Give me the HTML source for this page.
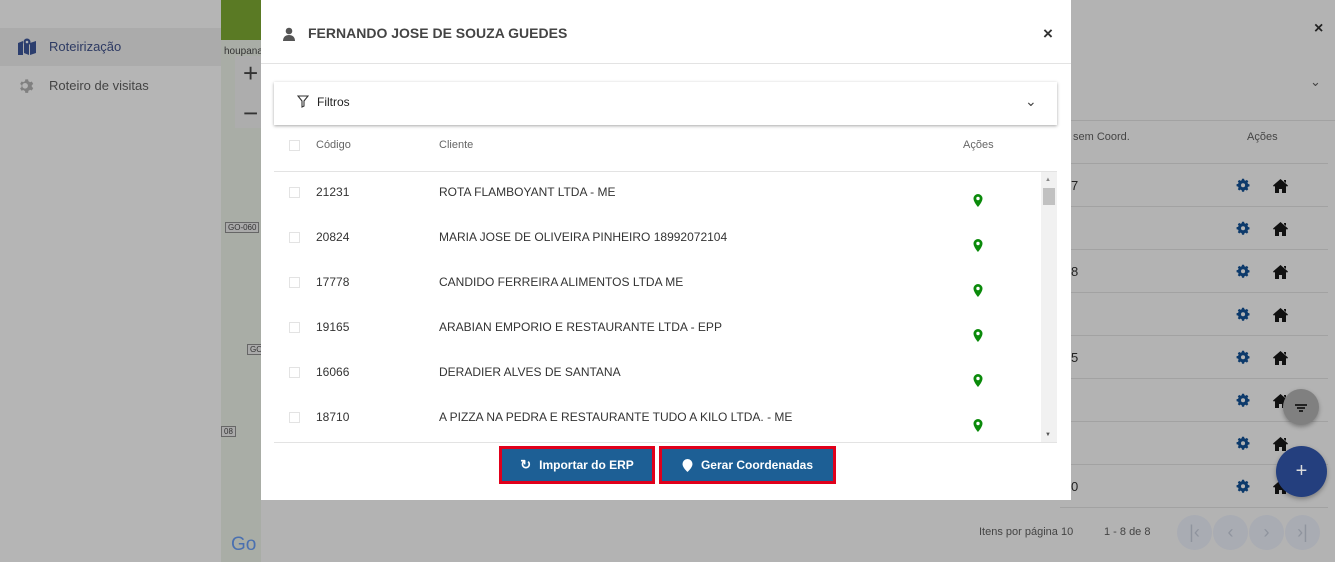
<!DOCTYPE html>
<html><head><meta charset="utf-8"><style>
*{box-sizing:border-box;margin:0;padding:0}
body{width:1335px;height:562px;overflow:hidden;position:relative;background:#b3b3b3;font-family:"Liberation Sans",sans-serif;color:#333}
.abs{position:absolute}
.side{left:0;top:0;width:221px;height:562px;background:#b5b5b5}
.map{left:221px;top:0;width:40px;height:562px;background:#a9ada6}
.rrow{position:absolute;left:1060px;width:268px;height:1px;background:#a2a2a2}
.modal{left:261px;top:0;width:810px;height:500px;background:#fff}
.row{position:absolute;left:0;width:783px;height:45px;font-size:12px;color:#333}
.cb{position:absolute;left:15px;width:11px;height:11px;border:1px solid #e3e3e3}
.btn{position:absolute;top:446px;height:38px;border:3px solid #e0001b;background:#1d5f95;color:#fff;font-weight:bold;font-size:12px;display:flex;align-items:center;justify-content:center;gap:8px}
</style></head><body>
<div class="abs side">
 <div class="abs" style="left:0;top:28px;width:221px;height:38px;background:#ababab"></div>
 <svg class="abs" style="left:18px;top:38px" width="18" height="17" viewBox="0 0 18 17"><path d="M0 5l5-2v14l-5 2z M6 3l5 2v12l-5-2z M12 5l6-2v12l-6 2z" fill="#2c3e6e"/><circle cx="9" cy="4" r="3.5" fill="#2c3e6e"/><circle cx="9" cy="4" r="1.3" fill="#b5b5b5"/></svg>
 <div class="abs" style="left:49px;top:39px;font-size:13px;color:#2d3a63">Roteirização</div>
 <svg class="abs" style="left:18px;top:78px" width="17" height="17" viewBox="0 0 24 24"><path fill="#808080" d="M12 8a4 4 0 100 8 4 4 0 000-8zm9.4 5.5l2.1 1.6-2 3.5-2.5-1a8 8 0 01-2.3 1.4L16.3 22h-4l-.4-2.6a8 8 0 01-2.4-1.4l-2.5 1-2-3.5 2.1-1.6a8 8 0 010-2.9L5 9.4l2-3.5 2.5 1A8 8 0 0111.9 5.5L12.3 3h4l.4 2.6a8 8 0 012.3 1.4l2.5-1 2 3.5-2.1 1.6a8 8 0 010 2.9z" transform="translate(-2 -1)"/></svg>
 <div class="abs" style="left:49px;top:78px;font-size:13px;color:#444">Roteiro de visitas</div>
</div>
<div class="abs map">
 <div class="abs" style="left:0;top:0;width:40px;height:40px;background:#5a7a24"></div>
 <div class="abs" style="left:3px;top:46px;font-size:10px;color:#333">houpana</div>
 <div class="abs" style="left:14px;top:56px;width:26px;height:72px;background:#adadad"></div>
 <div class="abs" style="left:22px;top:58px;font-size:26px;color:#333;line-height:30px">+</div>
 <div class="abs" style="left:22px;top:98px;font-size:26px;color:#333;line-height:30px">−</div>
 <div class="abs" style="left:4px;top:222px;font-size:8px;border:1px solid #666;padding:0 2px;background:#aaa">GO-060</div>
 <div class="abs" style="left:26px;top:344px;font-size:8px;border:1px solid #666;padding:0 2px;background:#aaa">GO</div>
 <div class="abs" style="left:0;top:426px;font-size:8px;border:1px solid #666;padding:0 2px;background:#aaa">08</div>
 <div class="abs" style="left:10px;top:534px;font-size:19px;color:#4a70b0">Go</div>
</div>
<div class="abs" style="left:1314px;top:20px;font-size:16px;color:#222;font-weight:bold">×</div>
<div class="abs" style="left:1310px;top:74px;font-size:13px;color:#444">⌄</div>
<div class="abs" style="left:1060px;top:120px;width:275px;height:1px;background:#a2a2a2"></div>
<div class="abs" style="left:1073px;top:131px;font-size:11px;color:#444">sem Coord.</div>
<div class="abs" style="left:1247px;top:131px;font-size:11px;color:#444">Ações</div>
<div class="rrow" style="top:163px"></div><div class="rrow" style="top:206px"></div><div class="rrow" style="top:249px"></div><div class="rrow" style="top:292px"></div><div class="rrow" style="top:335px"></div><div class="rrow" style="top:378px"></div><div class="rrow" style="top:421px"></div><div class="rrow" style="top:464px"></div><div class="rrow" style="top:507px"></div>
<div class="abs" style="left:1071px;top:178px;font-size:13px;color:#222">7</div>
<div class="abs" style="left:1071px;top:264px;font-size:13px;color:#222">8</div>
<div class="abs" style="left:1071px;top:350px;font-size:13px;color:#222">5</div>
<div class="abs" style="left:1071px;top:479px;font-size:13px;color:#222">0</div>
<svg class="abs" style="left:1230px;top:168px" width="70" height="330" viewBox="0 0 70 330">
 <defs>
  <g id="g"><path fill="#0d3a6b" d="M14 9.8V12.2l-1.8.4a5 5 0 01-.6 1.4l1 1.5-1.7 1.7-1.5-1a5 5 0 01-1.4.6L7.6 18.5H5.2l-.4-1.8a5 5 0 01-1.4-.6l-1.5 1L.2 15.4l1-1.5A5 5 0 01.6 12.5L-1.2 12V9.6l1.8-.4a5 5 0 01.6-1.4l-1-1.5L1.9 4.6l1.5 1a5 5 0 011.4-.6L5.2 3.2h2.4l.4 1.8a5 5 0 011.4.6l1.5-1 1.7 1.7-1 1.5a5 5 0 01.6 1.4z M6.4 8.5a2.4 2.4 0 100 4.8 2.4 2.4 0 000-4.8z" transform="translate(7.6 -2) scale(.85)"/></g>
  <g id="h"><path fill="#111" d="M44 7.5l7.5-6.5 7.5 6.5-1 1.2-1-0.8V15h-4v-4h-3v4h-4V7.9l-1 .8z M55 2h2v3l-2-1.7z" transform="translate(-1 0)"/></g>
 </defs>
 <use href="#g" y="10"/><use href="#h" y="10"/>
 <use href="#g" y="53"/><use href="#h" y="53"/>
 <use href="#g" y="96"/><use href="#h" y="96"/>
 <use href="#g" y="139"/><use href="#h" y="139"/>
 <use href="#g" y="182"/><use href="#h" y="182"/>
 <use href="#g" y="225"/><use href="#h" y="225"/>
 <use href="#g" y="268"/><use href="#h" y="268"/>
 <use href="#g" y="311"/><use href="#h" y="311"/>
</svg>
<div class="abs" style="left:1283px;top:389px;width:36px;height:36px;border-radius:50%;background:#808080;box-shadow:0 2px 4px rgba(0,0,0,.3)"><div style="position:absolute;left:12px;top:15px;width:12px;height:1.5px;background:#222"></div><div style="position:absolute;left:14px;top:18px;width:8px;height:1.5px;background:#222"></div><div style="position:absolute;left:16px;top:21px;width:4px;height:1.5px;background:#222"></div></div>
<div class="abs" style="left:1276px;top:446px;width:51px;height:51px;border-radius:50%;background:#243f7e;color:#ddd;text-align:center;line-height:51px;font-size:20px;box-shadow:0 2px 5px rgba(0,0,0,.3)">+</div>
<div class="abs" style="left:979px;top:526px;font-size:11px;color:#444">Itens por página 10</div>
<div class="abs" style="left:1104px;top:526px;font-size:11px;color:#444">1 - 8 de 8</div>
<div class="abs" style="left:1177px;top:515px;display:flex;gap:1px;color:#8f949e;font-size:18px;text-align:center;line-height:35px"><div style="width:35px;height:35px;border-radius:50%;background:#a9acb3">|‹</div><div style="width:35px;height:35px;border-radius:50%;background:#a9acb3">‹</div><div style="width:35px;height:35px;border-radius:50%;background:#a9acb3">›</div><div style="width:35px;height:35px;border-radius:50%;background:#a9acb3">›|</div></div>

<div class="abs modal">
 <svg class="abs" style="left:21px;top:27px" width="14" height="14" viewBox="0 0 14 14"><circle cx="7" cy="4" r="3.3" fill="#555"/><path d="M1 14c0-4 2.5-6 6-6s6 2 6 6z" fill="#555"/></svg>
 <div class="abs" style="left:47px;top:25px;font-size:14px;font-weight:bold;color:#444">FERNANDO JOSE DE SOUZA GUEDES</div>
 <div class="abs" style="left:782px;top:24px;font-size:17px;font-weight:bold;color:#333">×</div>
 <div class="abs" style="left:0;top:63px;width:810px;height:1px;background:#e3e3e3"></div>
 <div class="abs" style="left:13px;top:82px;width:783px;height:43px;background:#fff;box-shadow:0 1px 3px rgba(0,0,0,.35)">
  <svg class="abs" style="left:23px;top:13px" width="12" height="13" viewBox="0 0 12 13"><path d="M1 1h10L7 6v5l-2 1V6z" fill="none" stroke="#333" stroke-width="1.1"/></svg>
  <div class="abs" style="left:43px;top:13px;font-size:12px;color:#222">Filtros</div>
  <div class="abs" style="left:751px;top:11px;font-size:14px;color:#444">⌄</div>
 </div>
 <div class="abs" style="left:13px;top:125px;width:783px;height:317px">
  <div class="cb" style="top:15px"></div>
  <div class="abs" style="left:42px;top:14px;font-size:11px;color:#666">Código</div>
  <div class="abs" style="left:165px;top:14px;font-size:11px;color:#666">Cliente</div>
  <div class="abs" style="left:689px;top:14px;font-size:11px;color:#666">Ações</div>
  <div class="abs" style="left:0;top:46px;width:783px;height:1px;background:#e3e3e3"></div>
  <div class="abs" style="left:767px;top:47px;width:16px;height:270px;background:#f1f1f1"><div style="position:absolute;left:2px;top:16px;width:12px;height:17px;background:#c1c1c1"></div><div style="position:absolute;left:4px;top:5px;font-size:6px;color:#888">▲</div><div style="position:absolute;left:4px;bottom:4px;font-size:6px;color:#555">▼</div></div>
 </div>
 <div class="abs" style="left:13px;top:172px;width:767px;height:270px;overflow:hidden">
  <div class="row" style="top:0"><div class="cb" style="top:15px"></div><div class="abs" style="left:42px;top:13px">21231</div><div class="abs" style="left:165px;top:13px">ROTA FLAMBOYANT LTDA - ME</div></div>
  <div class="row" style="top:45px"><div class="cb" style="top:15px"></div><div class="abs" style="left:42px;top:13px">20824</div><div class="abs" style="left:165px;top:13px">MARIA JOSE DE OLIVEIRA PINHEIRO 18992072104</div></div>
  <div class="row" style="top:90px"><div class="cb" style="top:15px"></div><div class="abs" style="left:42px;top:13px">17778</div><div class="abs" style="left:165px;top:13px">CANDIDO FERREIRA ALIMENTOS LTDA ME</div></div>
  <div class="row" style="top:135px"><div class="cb" style="top:15px"></div><div class="abs" style="left:42px;top:13px">19165</div><div class="abs" style="left:165px;top:13px">ARABIAN EMPORIO E RESTAURANTE LTDA - EPP</div></div>
  <div class="row" style="top:180px"><div class="cb" style="top:15px"></div><div class="abs" style="left:42px;top:13px">16066</div><div class="abs" style="left:165px;top:13px">DERADIER ALVES DE SANTANA</div></div>
  <div class="row" style="top:225px"><div class="cb" style="top:15px"></div><div class="abs" style="left:42px;top:13px">18710</div><div class="abs" style="left:165px;top:13px">A PIZZA NA PEDRA E RESTAURANTE TUDO A KILO LTDA. - ME</div></div>
 </div>
 <svg class="abs" style="left:712px;top:194px" width="10" height="240" viewBox="0 0 10 240">
  <g fill="#0a8a0a"><path id="p" d="M5 0a4.5 4.5 0 00-4.5 4.5C.5 8 5 13 5 13s4.5-5 4.5-8.5A4.5 4.5 0 005 0zm0 2.8a1.7 1.7 0 110 3.4 1.7 1.7 0 010-3.4z"/></g>
  <use href="#p" fill="#0a8a0a" y="45"/><use href="#p" fill="#0a8a0a" y="90"/><use href="#p" fill="#0a8a0a" y="135"/><use href="#p" fill="#0a8a0a" y="180"/><use href="#p" fill="#0a8a0a" y="225"/>
 </svg>
 <div class="abs" style="left:13px;top:442px;width:783px;height:1px;background:#e3e3e3"></div>
 <div class="btn" style="left:238px;width:156px"><span style="font-size:13px">↻</span>Importar do ERP</div>
 <div class="btn" style="left:398px;width:177px"><svg width="11" height="13" viewBox="0 0 11 13"><path d="M5.5 0A5 5 0 00.5 5c0 3.5 5 8 5 8s5-4.5 5-8a5 5 0 00-5-5z" fill="#fff"/></svg>Gerar Coordenadas</div>
</div>
</body></html>
